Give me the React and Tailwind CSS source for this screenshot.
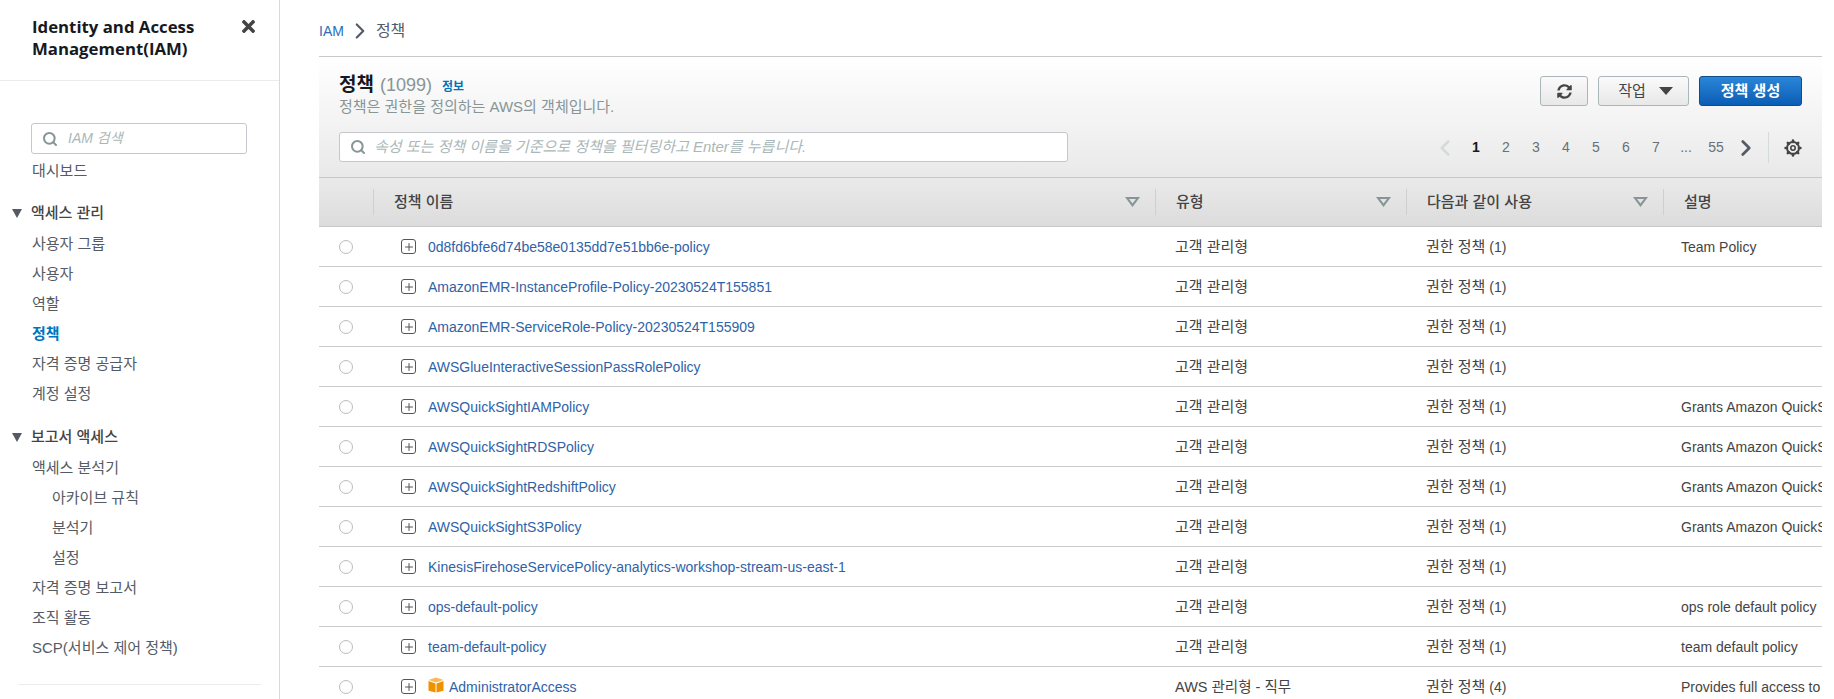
import { ChevronLeft, ChevronRight, Search, Plus } from "lucide-react";
import { FaTimes, FaSyncAlt } from "react-icons/fa";

const rows = [
  { name: "0d8fd6bfe6d74be58e0135dd7e51bb6e-policy", type: "고객 관리형", count: 1, desc: "Team Policy" },
  { name: "AmazonEMR-InstanceProfile-Policy-20230524T155851", type: "고객 관리형", count: 1, desc: "" },
  { name: "AmazonEMR-ServiceRole-Policy-20230524T155909", type: "고객 관리형", count: 1, desc: "" },
  { name: "AWSGlueInteractiveSessionPassRolePolicy", type: "고객 관리형", count: 1, desc: "" },
  { name: "AWSQuickSightIAMPolicy", type: "고객 관리형", count: 1, desc: "Grants Amazon QuickSight access" },
  { name: "AWSQuickSightRDSPolicy", type: "고객 관리형", count: 1, desc: "Grants Amazon QuickSight access" },
  { name: "AWSQuickSightRedshiftPolicy", type: "고객 관리형", count: 1, desc: "Grants Amazon QuickSight access" },
  { name: "AWSQuickSightS3Policy", type: "고객 관리형", count: 1, desc: "Grants Amazon QuickSight access" },
  { name: "KinesisFirehoseServicePolicy-analytics-workshop-stream-us-east-1", type: "고객 관리형", count: 1, desc: "" },
  { name: "ops-default-policy", type: "고객 관리형", count: 1, desc: "ops role default policy" },
  { name: "team-default-policy", type: "고객 관리형", count: 1, desc: "team default policy" },
  { name: "AdministratorAccess", type: "AWS 관리형 - 직무", count: 4, desc: "Provides full access to AWS services", aws: true },
];

const gridCols = "grid grid-cols-[54px_782px_251px_257px_159px]";

function NavItem({ children, active, sub }) {
  return (
    <div className={`h-[30px] pt-px flex items-center whitespace-nowrap ${sub ? "pl-[52px]" : "pl-[32px]"} ${active ? "text-[#0073bb] font-bold" : "text-[#545b64]"}`}>
      {children}
    </div>
  );
}

function NavSection({ children }) {
  return (
    <div className="h-[30px] pt-px flex items-center pl-[12px] font-medium text-[#444] whitespace-nowrap">
      <svg width="10" height="9" viewBox="0 0 10 9" className="mr-[9px]">
        <path d="M0 0 H10 L5 9 Z" fill="#545b64" />
      </svg>
      {children}
    </div>
  );
}

function Sidebar() {
  return (
    <aside className="w-[280px] shrink-0 border-r border-[#d5dbdb] text-[15px]">
      <div className="h-[81px] border-b border-[#eaeded] pl-[32px] pr-[21px] pt-[16px] flex justify-between">
        <div className="text-[16.8px] leading-[22px] font-bold text-[#16191f] font-['Open_Sans','Noto_Sans_CJK_KR',sans-serif]">
          Identity and Access<br />Management(IAM)
        </div>
        <FaTimes className="w-[19px] h-[19px] mt-[1px] text-[#444]" />
      </div>
      <div className="mt-[42px] mx-[31px] w-[216px] h-[31px] border border-[#c6c6cd] rounded-[3px] flex items-center pl-[10px]">
        <Search className="w-[16px] h-[16px] text-[#879596]" strokeWidth={3} />
        <span className="ml-[10px] text-[14px] italic text-[#aab7b8]">IAM 검색</span>
      </div>
      <div className="mt-[2px]"><NavItem>대시보드</NavItem></div>
      <div className="mt-[12px]"><NavSection>액세스 관리</NavSection></div>
      <div className="mt-px">
        <NavItem>사용자 그룹</NavItem>
        <NavItem>사용자</NavItem>
        <NavItem>역할</NavItem>
        <NavItem active>정책</NavItem>
        <NavItem>자격 증명 공급자</NavItem>
        <NavItem>계정 설정</NavItem>
      </div>
      <div className="mt-[13px]"><NavSection>보고서 액세스</NavSection></div>
      <div className="mt-px">
        <NavItem>액세스 분석기</NavItem>
        <NavItem sub>아카이브 규칙</NavItem>
        <NavItem sub>분석기</NavItem>
        <NavItem sub>설정</NavItem>
        <NavItem>자격 증명 보고서</NavItem>
        <NavItem>조직 활동</NavItem>
        <NavItem>SCP(서비스 제어 정책)</NavItem>
      </div>
      <div className="mt-[21px] mx-[18px] border-t border-[#eaeded]" />
    </aside>
  );
}

function Gear() {
  return (
    <svg width="18" height="18" viewBox="0 0 18 18" className="ml-[15px]">
      <circle cx="9" cy="9" r="6" fill="none" stroke="#444" strokeWidth="2" />
      <circle cx="9" cy="9" r="2.2" fill="none" stroke="#444" strokeWidth="1.6" />
      <path
        d="M9 1.6v1.4M9 15v1.4M1.6 9h1.4M15 9h1.4M3.8 3.8l1 1M13.2 13.2l1 1M3.8 14.2l1-1M13.2 4.8l1-1"
        stroke="#444"
        strokeWidth="2.6"
        strokeLinecap="round"
      />
    </svg>
  );
}

function Pager() {
  const pages = ["2", "3", "4", "5", "6", "7", "...", "55"];
  return (
    <div className="flex items-center text-[14px] text-[#687078]">
      <ChevronLeft className="w-[26px] h-[26px] text-[#d5dbdb]" strokeWidth={2.5} />
      <span className="w-[30px] text-center font-bold text-[#16191f] ml-[3px]">1</span>
      {pages.map((p) => (
        <span key={p} className="w-[30px] text-center">{p}</span>
      ))}
      <ChevronRight className="ml-[2px] w-[26px] h-[26px] text-[#545b64]" strokeWidth={2.5} />
      <div className="ml-[9px] h-[31px] border-l border-[#d5dbdb]" />
      <Gear />
    </div>
  );
}

function PanelHeader() {
  return (
    <div className="h-[121px] border-b border-[#c8c8c8] bg-linear-to-b from-[#ffffff] to-[#e9e9e9] pl-[20px] pr-[20px] flex justify-between">
      <div className="pt-[14px]">
        <div className="flex items-baseline h-[26px]">
          <span className="text-[19px] font-bold text-[#16191f]">정책</span>
          <span className="ml-[6px] text-[18px] text-[#879596]">(1099)</span>
          <span className="ml-[10px] text-[12px] font-bold text-[#0073bb]">정보</span>
        </div>
        <div className="text-[15px] leading-[20px] text-[#879596]">정책은 권한을 정의하는 AWS의 객체입니다.</div>
        <div className="mt-[15px] w-[729px] h-[30px] bg-white border border-[#c6c6cd] rounded-[3px] flex items-center pl-[10px]">
          <Search className="w-[16px] h-[16px] text-[#879596]" strokeWidth={3} />
          <span className="ml-[8px] text-[15px] italic text-[#aab7b8]">속성 또는 정책 이름을 기준으로 정책을 필터링하고 Enter를 누릅니다.</span>
        </div>
      </div>
      <div className="flex flex-col items-end pt-[19px]">
        <div className="flex gap-[10px]">
          <button className="w-[48px] h-[30px] flex items-center justify-center rounded-[3px] border border-[#aab7b8] bg-linear-to-b from-[#fafafa] to-[#e8e8e8] text-[#444]">
            <FaSyncAlt className="w-[15px] h-[15px]" />
          </button>
          <button className="w-[91px] h-[30px] pl-[4px] flex items-center justify-center gap-[13px] rounded-[3px] border border-[#aab7b8] bg-linear-to-b from-[#fafafa] to-[#e8e8e8] text-[15px] text-[#444]">
            작업
            <svg width="14" height="8" viewBox="0 0 14 8"><path d="M0 0 H14 L7 8 Z" fill="#444" /></svg>
          </button>
          <button className="w-[103px] h-[30px] rounded-[3px] border border-[#0f4c8a] bg-linear-to-b from-[#2a86d8] to-[#0a5db4] text-[15px] font-bold text-white">
            정책 생성
          </button>
        </div>
        <div className="mt-[26px]"><Pager /></div>
      </div>
    </div>
  );
}

function HeadCell({ children, sort = true }) {
  return (
    <div className="h-[26px] border-l border-[#cfcfcf] flex items-center justify-between pl-[20px] pr-[15px] whitespace-nowrap overflow-hidden">
      <span>{children}</span>
      {sort && (
        <svg width="15" height="10" viewBox="0 0 15 10">
          <path d="M0 0 H15 L7.5 10 Z M4 2 L7.5 6.6 L11 2 Z" fill="#879596" fillRule="evenodd" />
        </svg>
      )}
    </div>
  );
}

function Cube() {
  return (
    <svg width="16" height="16" viewBox="0 0 16 16" className="mr-[5px] -mt-[3px] shrink-0">
      <path d="M8 0.5 L15.5 3 L8 5.5 L0.5 3 Z" fill="#f7b955" />
      <path d="M0.5 4 L7.5 6.5 V15.5 L1.5 14 Q0.5 13.8 0.5 13 Z" fill="#f29100" />
      <path d="M15.5 4 L8.5 6.5 V15.5 L14.5 14 Q15.5 13.8 15.5 13 Z" fill="#f29100" />
    </svg>
  );
}

function Row({ row }) {
  return (
    <div className={`${gridCols} h-[40px] border-b border-[#cccccc] items-center text-[14px] text-[#444]`}>
      <div className="pl-[20px]">
        <div className="w-[14px] h-[14px] rounded-full border border-[#bcbcbc] bg-white" />
      </div>
      <div className="pl-[28px] flex items-center">
        <div className="w-[15px] h-[15px] rounded-[3px] border-[1.5px] border-[#555] flex items-center justify-center mr-[12px] shrink-0">
          <Plus className="w-[12px] h-[12px] shrink-0 text-[#555]" strokeWidth={2} />
        </div>
        {row.aws && <Cube />}
        <span className="pt-[2px] text-[#2f62a8] whitespace-nowrap">{row.name}</span>
      </div>
      <div className={`pl-[20px] pt-[2px] whitespace-nowrap ${row.aws ? "text-[14.5px]" : "text-[15px]"}`}>{row.type}</div>
      <div className="pl-[20px] pt-[2px] whitespace-nowrap"><span className="text-[15px]">권한 정책</span> ({row.count})</div>
      <div className="pl-[18px] pt-[2px] whitespace-nowrap overflow-hidden">{row.desc}</div>
    </div>
  );
}

export default function App() {
  return (
    <div className="h-[699px] w-[1834px] overflow-hidden flex bg-white font-['Liberation_Sans','Noto_Sans_CJK_KR',sans-serif]">
      <Sidebar />
      <main className="pl-[39px]">
        <div className="w-[1503px] h-[57px] border-b border-[#c8c8c8] flex items-center text-[14px] pt-[6px]">
          <span className="text-[#2a6ebb]">IAM</span>
          <ChevronRight className="mx-[3px] w-[26px] h-[26px] text-[#545b64]" strokeWidth={2} />
          <span className="text-[16px] text-[#545b64]">정책</span>
        </div>
        <div className="w-[1503px]">
          <PanelHeader />
          <div className={`${gridCols} h-[49px] items-center bg-linear-to-b from-[#eaeaea] to-[#dcdcdc] border-b border-[#c8c8c8] text-[15px] font-medium text-[#444]`}>
            <div />
            <HeadCell>정책 이름</HeadCell>
            <HeadCell>유형</HeadCell>
            <HeadCell>다음과 같이 사용</HeadCell>
            <HeadCell sort={false}>설명</HeadCell>
          </div>
          {rows.map((r) => <Row key={r.name} row={r} />)}
        </div>
      </main>
    </div>
  );
}
